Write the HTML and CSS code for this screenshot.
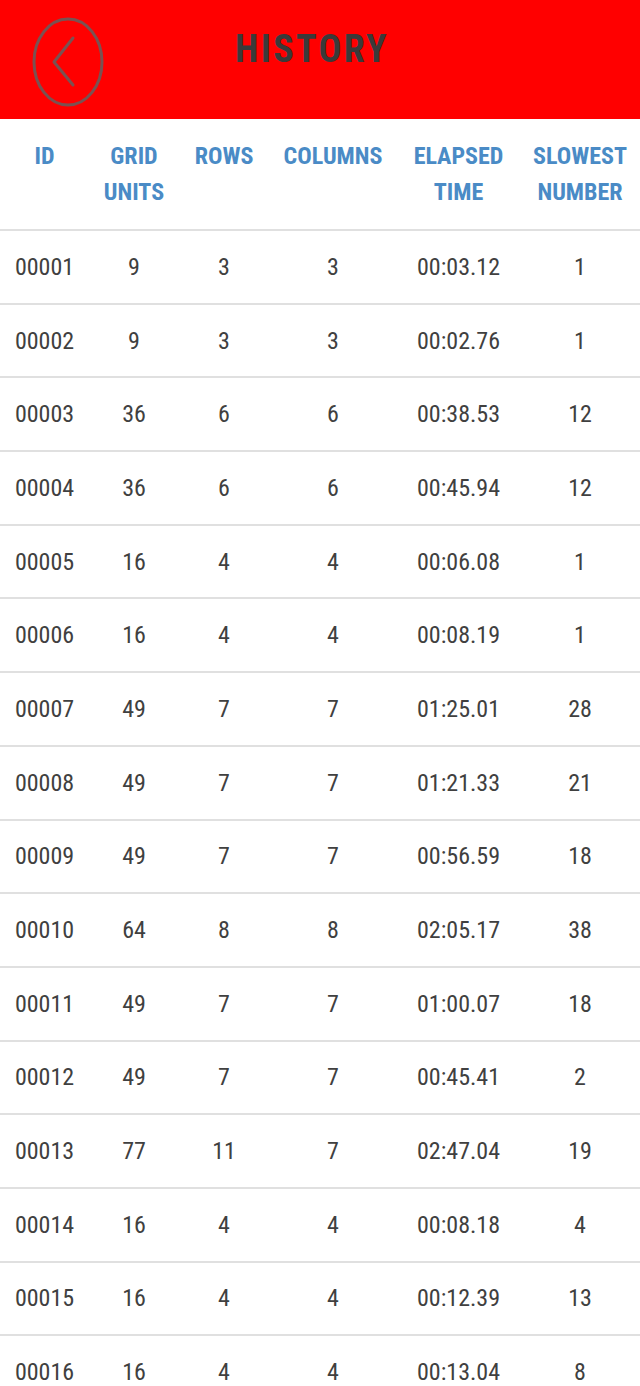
FILE: index.html
```html
<!DOCTYPE html>
<html>
<head>
  <meta charset="utf-8">
  <title>History</title>
  <link rel="stylesheet" href="styles.css">
</head>
<body>

<div class="topbar">
  <button class="back-button" aria-label="Back">
    <svg width="72" height="90" viewBox="0 0 72 90">
      <ellipse cx="36" cy="45" rx="34" ry="43" fill="none" stroke="#7a5252" stroke-width="3"/>
      <polyline points="41,21 22,45 41,68" fill="none" stroke="#7a5252" stroke-width="3" stroke-linecap="round" stroke-linejoin="round"/>
    </svg>
  </button>
  <h1 class="title">HISTORY</h1>
</div>

<table class="history">
  <colgroup>
    <col class="col-id">
    <col class="col-units">
    <col class="col-rows">
    <col class="col-columns">
    <col class="col-time">
    <col class="col-slowest">
  </colgroup>
  <thead>
    <tr>
      <th>ID</th>
      <th>GRID<br>UNITS</th>
      <th>ROWS</th>
      <th>COLUMNS</th>
      <th>ELAPSED<br>TIME</th>
      <th>SLOWEST<br>NUMBER</th>
    </tr>
  </thead>
  <tbody>
    <tr><td>00001</td><td>9</td><td>3</td><td>3</td><td>00:03.12</td><td>1</td></tr>
    <tr><td>00002</td><td>9</td><td>3</td><td>3</td><td>00:02.76</td><td>1</td></tr>
    <tr><td>00003</td><td>36</td><td>6</td><td>6</td><td>00:38.53</td><td>12</td></tr>
    <tr><td>00004</td><td>36</td><td>6</td><td>6</td><td>00:45.94</td><td>12</td></tr>
    <tr><td>00005</td><td>16</td><td>4</td><td>4</td><td>00:06.08</td><td>1</td></tr>
    <tr><td>00006</td><td>16</td><td>4</td><td>4</td><td>00:08.19</td><td>1</td></tr>
    <tr><td>00007</td><td>49</td><td>7</td><td>7</td><td>01:25.01</td><td>28</td></tr>
    <tr><td>00008</td><td>49</td><td>7</td><td>7</td><td>01:21.33</td><td>21</td></tr>
    <tr><td>00009</td><td>49</td><td>7</td><td>7</td><td>00:56.59</td><td>18</td></tr>
    <tr><td>00010</td><td>64</td><td>8</td><td>8</td><td>02:05.17</td><td>38</td></tr>
    <tr><td>00011</td><td>49</td><td>7</td><td>7</td><td>01:00.07</td><td>18</td></tr>
    <tr><td>00012</td><td>49</td><td>7</td><td>7</td><td>00:45.41</td><td>2</td></tr>
    <tr><td>00013</td><td>77</td><td>11</td><td>7</td><td>02:47.04</td><td>19</td></tr>
    <tr><td>00014</td><td>16</td><td>4</td><td>4</td><td>00:08.18</td><td>4</td></tr>
    <tr><td>00015</td><td>16</td><td>4</td><td>4</td><td>00:12.39</td><td>13</td></tr>
    <tr><td>00016</td><td>16</td><td>4</td><td>4</td><td>00:13.04</td><td>8</td></tr>
  </tbody>
</table>

</body>
</html>
```

FILE: styles.css
```css
body {
  margin: 0;
  font-family: "Roboto Condensed", "Liberation Sans Narrow", "DejaVu Sans Condensed", Roboto, sans-serif;
  background: #fff;
  color: #333;
}
.topbar {
  background: #ff0000;
  height: 119px;
  display: grid;
  grid-template-columns: 1fr auto 1fr;
  align-items: start;
}
.back-button {
  justify-self: start;
  margin: 17px 0 0 32px;
  padding: 0;
  border: none;
  background: none;
  line-height: 0;
  cursor: pointer;
}
.title {
  margin: 27px 16px 0 0;
  font-size: 38px;
  font-weight: bold;
  letter-spacing: 2.3px;
  color: #3a3a3a;
  line-height: 44px;
}
.history {
  width: 100%;
  border-collapse: collapse;
  table-layout: fixed;
}
.col-id { width: 89px; }
.col-units { width: 90px; }
.col-rows { width: 90px; }
.col-columns { width: 128px; }
.col-time { width: 123px; }
.col-slowest { width: 120px; }
.history th {
  color: #4a8bc6;
  font-size: 24px;
  font-weight: bold;
  line-height: 36px;
  padding: 19px 0 19px;
  border-bottom: 2px solid #e0e0e0;
  vertical-align: top;
}
.history td {
  text-align: center;
  font-size: 24px;
  height: 71.7px;
  padding: 0;
  border-bottom: 2px solid #e0e0e0;
  color: #404040;
}
```
